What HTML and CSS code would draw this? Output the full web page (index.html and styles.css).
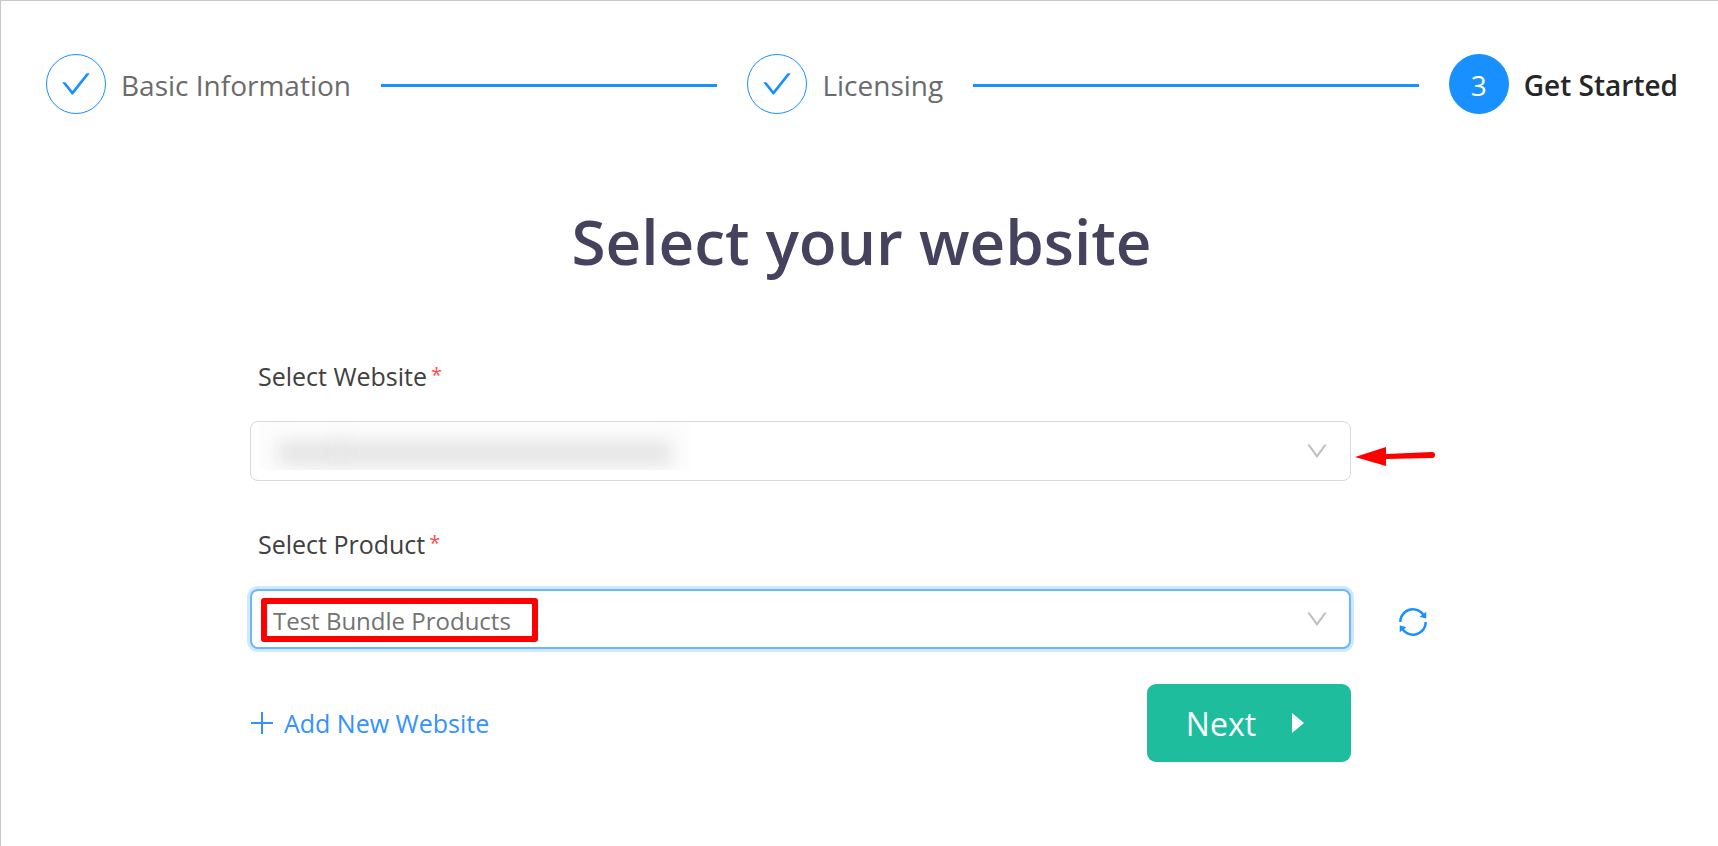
FILE: index.html
```html
<!DOCTYPE html>
<html lang="en">
<head>
	<meta charset="UTF-8" />
	<meta name="viewport" content="width=device-width, initial-scale=1.0" />
	<title>Select your website</title>
	<link rel="stylesheet" href="styles.css">
</head>
<body>
<svg class="defs" aria-hidden="true">
	<symbol id="check" viewBox="0 0 1024 1024"><path d="M912 190h-69.900c-9.800 0-19.100 4.500-25.100 12.200L404.700 724.500 207 474a32 32 0 0 0-25.100-12.200H112c-6.700 0-10.400 7.700-6.300 12.900l273.900 347c12.800 16.200 37.400 16.200 50.300 0l488.400-618.900c4.100-5.100.4-12.800-6.300-12.800z"/></symbol>
	<symbol id="down" viewBox="0 0 1024 1024"><path d="M884 256h-75c-5.100 0-9.900 2.500-12.900 6.600L512 654.200 227.900 262.600c-3-4.100-7.800-6.600-12.900-6.600h-75c-6.500 0-10.300 7.400-6.500 12.700l352.600 486.100c12.800 17.600 39 17.600 51.700 0l352.600-486.100c3.900-5.300.1-12.700-6.400-12.700z"/></symbol>
</svg>

<ol class="steps">
	<li class="step">
		<span class="step-icon"><svg><use href="#check"/></svg></span>
		<span class="step-title">Basic Information</span>
		<span class="step-line"></span>
	</li>
	<li class="step">
		<span class="step-icon"><svg><use href="#check"/></svg></span>
		<span class="step-title">Licensing</span>
		<span class="step-line"></span>
	</li>
	<li class="step active">
		<span class="step-icon">3</span>
		<span class="step-title">Get Started</span>
	</li>
</ol>

<h1>Select your website</h1>

<form class="site-form">
	<label for="website">Select Website<span class="required">*</span></label>
	<div class="select-box">
		<select id="website">
			<option value="1" label=" "></option>
		</select>
		<div class="hidden-url"><i></i><i></i></div>
		<svg class="arrow-down"><use href="#down"/></svg>
		<svg class="pointer" viewBox="0 0 80 20"><path d="M0 10 31 0v7L77 5a3 3 0 0 1 0 6l-46 1v7z"/></svg>
	</div>

	<label for="product">Select Product<span class="required">*</span></label>
	<div class="select-box">
		<select id="product" class="focused">
			<option>Test Bundle Products</option>
		</select>
		<div class="highlight"></div>
		<svg class="arrow-down"><use href="#down"/></svg>
	</div>
	<button type="button" class="reload" aria-label="Reload products">
		<svg viewBox="0 0 1024 1024"><path d="M168 504.200c1-43.700 10-86.100 26.900-126 17.300-41 42.100-77.700 73.700-109.400S337 212.300 378 195c42.400-17.900 87.400-27 133.900-27s91.500 9.100 133.800 27A341.500 341.500 0 0 1 755 268.800c9.900 9.900 19.200 20.400 27.800 31.400l-60.200 47a8 8 0 0 0 3 14.100l175.700 43c5 1.200 9.900-2.600 9.900-7.700l.8-180.900c0-6.700-7.700-10.500-12.900-6.300l-56.400 44.100C765.800 155.100 646.200 92 511.800 92 282.700 92 96.300 275.600 92 503.800a8 8 0 0 0 8 8.200h60c4.400 0 7.900-3.500 8-7.800zm756 7.800h-60c-4.400 0-7.900 3.500-8 7.800-1 43.700-10 86.100-26.900 126-17.300 41-42.100 77.800-73.700 109.400A342.450 342.450 0 0 1 512.100 856a342.240 342.240 0 0 1-243.200-100.800c-9.900-9.900-19.200-20.400-27.800-31.400l60.200-47a8 8 0 0 0-3-14.100l-175.700-43c-5-1.200-9.900 2.600-9.900 7.700l-.7 181c0 6.700 7.700 10.500 12.900 6.300l56.400-44.100C258.200 868.900 377.800 932 512.200 932c229.200 0 415.500-183.700 419.800-411.800a8 8 0 0 0-8-8.200z"/></svg>
	</button>

	<div class="actions">
		<a class="add-link" href="#">
			<svg viewBox="0 0 22 22"><path d="M11 0v22M0 11h22"/></svg>
			Add New Website
		</a>
		<button type="submit" class="next">
			Next
			<svg viewBox="0 0 12 20"><path d="M0 0 12 10 0 20z"/></svg>
		</button>
	</div>
</form>
</body>
</html>
```

FILE: styles.css
```css
* {
	box-sizing: border-box;
}
body {
	font-family: "Open Sans", "Noto Sans", sans-serif;
	background: #fff;
	margin: 0;
	min-height: 100vh;
	border-top: 1px solid #c8c8c8;
	border-left: 1px solid #c8c8c8;
}
.defs {
	display: none;
}

/* steps */
.steps {
	display: flex;
	gap: 30px;
	list-style: none;
	margin: 0;
	padding: 53px 40px 0 45px;
}
.step {
	display: flex;
	align-items: center;
	flex: 1 1 0;
	font-size: 28px;
	line-height: 60px;
	color: #6b6b6b;
}
.step-icon {
	display: flex;
	align-items: center;
	justify-content: center;
	width: 60px;
	height: 60px;
	margin-right: 15px;
	border: 1px solid #1890ff;
	border-radius: 50%;
}
.step-icon svg {
	width: 34px;
	height: 34px;
	fill: #1890ff;
}
.step-title {
	padding-top: 2px;
	line-height: 58px;
	white-space: nowrap;
}
.step-line {
	flex: 1;
	height: 3px;
	margin: 2px 0 0 30px;
	background: #1890ff;
}
.step.active {
	flex: none;
	font-weight: 600;
	color: #262626;
}
.active .step-icon {
	padding-top: 2px;
	background: #1890ff;
	color: #fff;
	font-weight: 400;
}

h1 {
	margin: 79px 0 0;
	padding-left: 4px;
	text-align: center;
	font-size: 62px;
	font-weight: 600;
	line-height: 96px;
	color: #45425e;
}

/* form */
.site-form {
	display: grid;
	grid-template-columns: 1fr 118px;
	width: 71%;
	margin: 62px auto 0;
}
label {
	grid-column: 1 / -1;
	padding-left: 8px;
	font-size: 25px;
	line-height: 50px;
	color: #404040;
}
.required {
	margin-left: 4px;
	font-size: 20px;
	line-height: 20px;
	vertical-align: 4px;
	color: #ff4d4f;
}
.select-box {
	position: relative;
	grid-column: 1;
	margin: 20px 0 38px;
}
select {
	display: block;
	appearance: none;
	width: 100%;
	height: 60px;
	padding: 0 22px;
	border: 1px solid #d9d9d9;
	border-radius: 8px;
	background: #fff;
	font: 24px "Open Sans", "Noto Sans", sans-serif;
	color: #737373;
	outline: none;
}
.focused {
	padding: 2px 21px 0;
	border: 2px solid #69b8ff;
	box-shadow: 0 0 0 3px #d1e9ff;
}
.arrow-down {
	position: absolute;
	right: 21px;
	top: 17px;
	width: 26px;
	height: 26px;
	fill: #bfbfbf;
	pointer-events: none;
}
.hidden-url {
	position: absolute;
	left: 10px;
	top: 2px;
	display: flex;
	width: 430px;
	height: 47px;
	padding: 18px 18px 0;
	overflow: hidden;
	background: #fdfdfd;
	pointer-events: none;
}
.hidden-url i {
	flex: 5;
	height: 24px;
	margin-left: -8px;
	background: #e4e4e4;
	filter: blur(9px);
}
.hidden-url i:first-child {
	flex: 1;
	margin-left: 0;
}
.pointer {
	position: absolute;
	left: calc(100% + 4px);
	top: 26px;
	width: 80px;
	height: 20px;
	fill: #f00;
}
.highlight {
	position: absolute;
	left: 11px;
	top: 9px;
	width: 277px;
	height: 44px;
	border: 6px solid #f00;
	border-radius: 3px;
	pointer-events: none;
}
.reload {
	align-self: start;
	justify-self: start;
	margin: 36px 0 0 45px;
	padding: 0;
	border: 0;
	background: none;
	cursor: pointer;
}
.reload svg {
	display: block;
	width: 34px;
	height: 34px;
	fill: #1890ff;
}
.actions {
	grid-column: 1;
	display: flex;
	align-items: center;
	justify-content: space-between;
	margin-top: -3px;
}
.add-link {
	display: flex;
	align-items: center;
	gap: 11px;
	padding-left: 1px;
	font-size: 25px;
	color: #3392ff;
	text-decoration: none;
}
.add-link svg {
	width: 22px;
	height: 22px;
	stroke: #3392ff;
	stroke-width: 2;
}
.next {
	display: flex;
	align-items: center;
	gap: 36px;
	height: 78px;
	padding: 0 47px 0 39px;
	border: 0;
	border-radius: 9px;
	background: #1dbd9d;
	font: 32px "Open Sans", "Noto Sans", sans-serif;
	color: #fff;
	cursor: pointer;
}
.next svg {
	width: 12px;
	height: 20px;
	fill: #fff;
}
```
